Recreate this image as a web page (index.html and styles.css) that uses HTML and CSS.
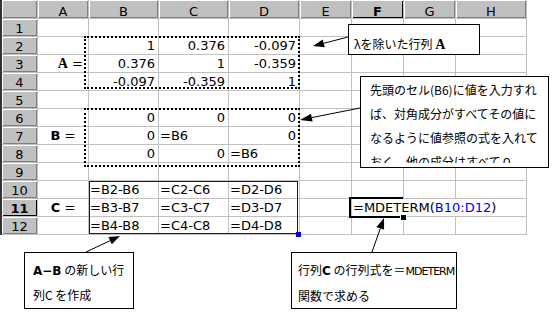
FILE: index.html
```html
<!DOCTYPE html>
<html lang="ja">
  <head>
    <meta charset="UTF-8" />
    <meta name="viewport" content="width=device-width, initial-scale=1.0" />
    <title>行列式 MDETERM</title>
    <link rel="stylesheet" href="styles.css">
  </head>
  <body>
    <div class="page">
      <div class="sheet">
        <div class="hd"></div>
        <div class="hd">A</div>
        <div class="hd">B</div>
        <div class="hd">C</div>
        <div class="hd">D</div>
        <div class="hd">E</div>
        <div class="hd on">F</div>
        <div class="hd">G</div>
        <div class="hd">H</div>

        <div class="hd">1</div>
        <div></div><div></div><div></div><div></div><div></div><div></div><div></div><div></div>

        <div class="hd">2</div>
        <div></div>
        <div class="num">1</div>
        <div class="num">0.376</div>
        <div class="num">-0.097</div>
        <div></div><div></div><div></div><div></div>

        <div class="hd">3</div>
        <div class="lbl lbl_a"><b class="mat">A</b> =</div>
        <div class="num">0.376</div>
        <div class="num">1</div>
        <div class="num">-0.359</div>
        <div></div><div></div><div></div><div></div>

        <div class="hd">4</div>
        <div></div>
        <div class="num">-0.097</div>
        <div class="num">-0.359</div>
        <div class="num">1</div>
        <div></div><div></div><div></div><div></div>

        <div class="hd">5</div>
        <div></div><div></div><div></div><div></div><div></div><div></div><div></div><div></div>

        <div class="hd">6</div>
        <div></div>
        <div class="num">0</div>
        <div class="num">0</div>
        <div class="num">0</div>
        <div></div><div></div><div></div><div></div>

        <div class="hd">7</div>
        <div class="lbl"><b>B</b> =</div>
        <div class="num">0</div>
        <div>=B6</div>
        <div class="num">0</div>
        <div></div><div></div><div></div><div></div>

        <div class="hd">8</div>
        <div></div>
        <div class="num">0</div>
        <div class="num">0</div>
        <div>=B6</div>
        <div></div><div></div><div></div><div></div>

        <div class="hd">9</div>
        <div></div><div></div><div></div><div></div><div></div><div></div><div></div><div></div>

        <div class="hd">10</div>
        <div></div>
        <div>=B2-B6</div>
        <div>=C2-C6</div>
        <div>=D2-D6</div>
        <div></div><div></div><div></div><div></div>

        <div class="hd on">11</div>
        <div class="lbl"><b>C</b> =</div>
        <div>=B3-B7</div>
        <div>=C3-C7</div>
        <div>=D3-D7</div>
        <div></div>
        <div class="over">=MDETERM(<span class="ref">B10:D12</span>)</div>

        <div class="hd">12</div>
        <div></div>
        <div>=B4-B8</div>
        <div>=C4-C8</div>
        <div>=D4-D8</div>
        <div></div><div></div><div></div><div></div>
      </div>

      <!-- ranges drawn over the sheet -->
      <div class="range range_a"></div>
      <div class="range range_b"></div>
      <div class="select_c"><span class="handle"></span></div>
      <div class="active_cell"><span class="handle"></span></div>

      <svg class="arrows" width="555" height="312" viewBox="0 0 555 312">
        <g stroke="#000" stroke-width="1">
          <line x1="348" y1="37" x2="323.7" y2="43.3" />
          <line x1="360" y1="108" x2="311.8" y2="117.6" />
          <line x1="86" y1="252" x2="110.1" y2="240.7" />
          <line x1="372" y1="252" x2="380.3" y2="228.4" />
        </g>
        <g fill="#000">
          <polygon points="313,46 322.7,39.4 324.7,47.2" />
          <polygon points="300,120 311,113.7 312.6,121.5" />
          <polygon points="120,236 111.8,244.3 108.4,237.1" />
          <polygon points="384,218 384.1,229.7 376.5,227.1" />
        </g>
      </svg>

      <div class="note note_a">λを除いた行列 <b class="mat">A</b></div>
      <div class="note note_b">
        <div class="note_text">先頭のセル(B6)に値を入力すれば、対角成分がすべてその値になるように値参照の式を入れておく。他の成分はすべて０</div>
      </div>
      <div class="note note_c"><b class="sans">A−B</b> の新しい行<br />列C を作成</div>
      <div class="note note_d">行列<b class="sans">C</b> の行列式を＝<span class="cond">MDETERM</span><br />関数で求める</div>
    </div>
  </body>
</html>
```

FILE: styles.css
```css
body {
  margin: 0;
  background: #fff;
  font-family: "DejaVu Sans", "Noto Sans CJK JP", sans-serif;
}
.page {
  position: relative;
  width: 555px;
  height: 312px;
  overflow: hidden;
}

/* worksheet: the gaps show through as grid lines */
.sheet {
  display: grid;
  grid-template-columns: 35px 50px 69px 69px 70px 51px 51px 51px 70px;
  grid-template-rows: 18px repeat(12, 17px);
  gap: 1px;
  width: max-content;
  padding: 0 1px 1px 0;
  background: #c0c0c0;
  border-left: 2px solid #333;
  font-size: 13px;
  color: #000;
}
.sheet > div {
  background: #fff;
  line-height: 17px;
  padding: 0 1px;
  white-space: nowrap;
  overflow: hidden;
}
.sheet > .hd {
  background: #c0c0c0;
  text-align: center;
  padding: 0;
  line-height: 19px;
  box-shadow: inset 1px 1px #fff, inset -1px -1px #808080;
}
.sheet > .hd:nth-child(-n + 9) {
  line-height: 23px;
}
.sheet > .hd.on {
  font-weight: bold;
  box-shadow: inset 1px 1px #fff, inset -1px -1px #000;
}
.sheet > .num {
  text-align: right;
  padding-right: 3px;
}
.sheet > .lbl {
  text-align: center;
}
.sheet > .lbl_a {
  text-align: right;
  padding-right: 5px;
}
.sheet > .over {
  grid-column: span 3;
  overflow: visible;
  position: relative;
  z-index: 1;
}
.ref {
  color: #0000ff;
}
.mat {
  font-family: "Liberation Serif", serif;
  font-size: 14px;
}

/* ranges and selection */
.range {
  position: absolute;
  border: 2px dotted #000;
}
.range_a {
  left: 84px;
  top: 36px;
  width: 212px;
  height: 49px;
}
.range_b {
  left: 84px;
  top: 108px;
  width: 212px;
  height: 55px;
}
.select_c {
  position: absolute;
  left: 89px;
  top: 181px;
  width: 207px;
  height: 51px;
  border: 1px solid #0000ff;
}
.select_c .handle {
  position: absolute;
  right: -4px;
  bottom: -4px;
  width: 5px;
  height: 5px;
  background: #0000ff;
}
.active_cell {
  position: absolute;
  left: 349px;
  top: 197px;
  width: 52px;
  height: 17px;
  border: 2px solid #000;
  border-right: 0;
  z-index: 2;
  pointer-events: none;
}
.active_cell .handle {
  position: absolute;
  right: -3px;
  bottom: -4px;
  width: 5px;
  height: 5px;
  background: #000;
  box-shadow: 0 0 0 1px #fff;
}

.arrows {
  position: absolute;
  left: 0;
  top: 0;
  pointer-events: none;
  z-index: 3;
}

/* text boxes */
.note {
  position: absolute;
  z-index: 4;
  background: #fff;
  border: 1px solid #000;
  font-family: "Noto Sans CJK JP", sans-serif;
  font-size: 12px;
  line-height: 24px;
  color: #000;
}
.note_a {
  left: 348px;
  top: 24px;
  width: 125px;
  height: 25px;
  padding: 4px 0 0 5px;
  line-height: 29px;
}
.note_b {
  left: 360px;
  top: 76px;
  width: 170px;
  padding: 1px 8px 4px 9px;
}
.note_text {
  height: 85px;
  overflow: hidden;
}
.note_c {
  left: 24px;
  top: 252px;
  width: 100px;
  height: 50px;
  padding: 5px 0 0 8px;
}
.note_d {
  left: 291px;
  top: 252px;
  width: 158px;
  height: 50px;
  padding: 5px 0 0 6px;
}
.sans {
  font-family: "DejaVu Sans", sans-serif;
}
.cond {
  font-family: "DejaVu Sans", sans-serif;
  font-size: 11px;
  letter-spacing: -1px;
}
```
